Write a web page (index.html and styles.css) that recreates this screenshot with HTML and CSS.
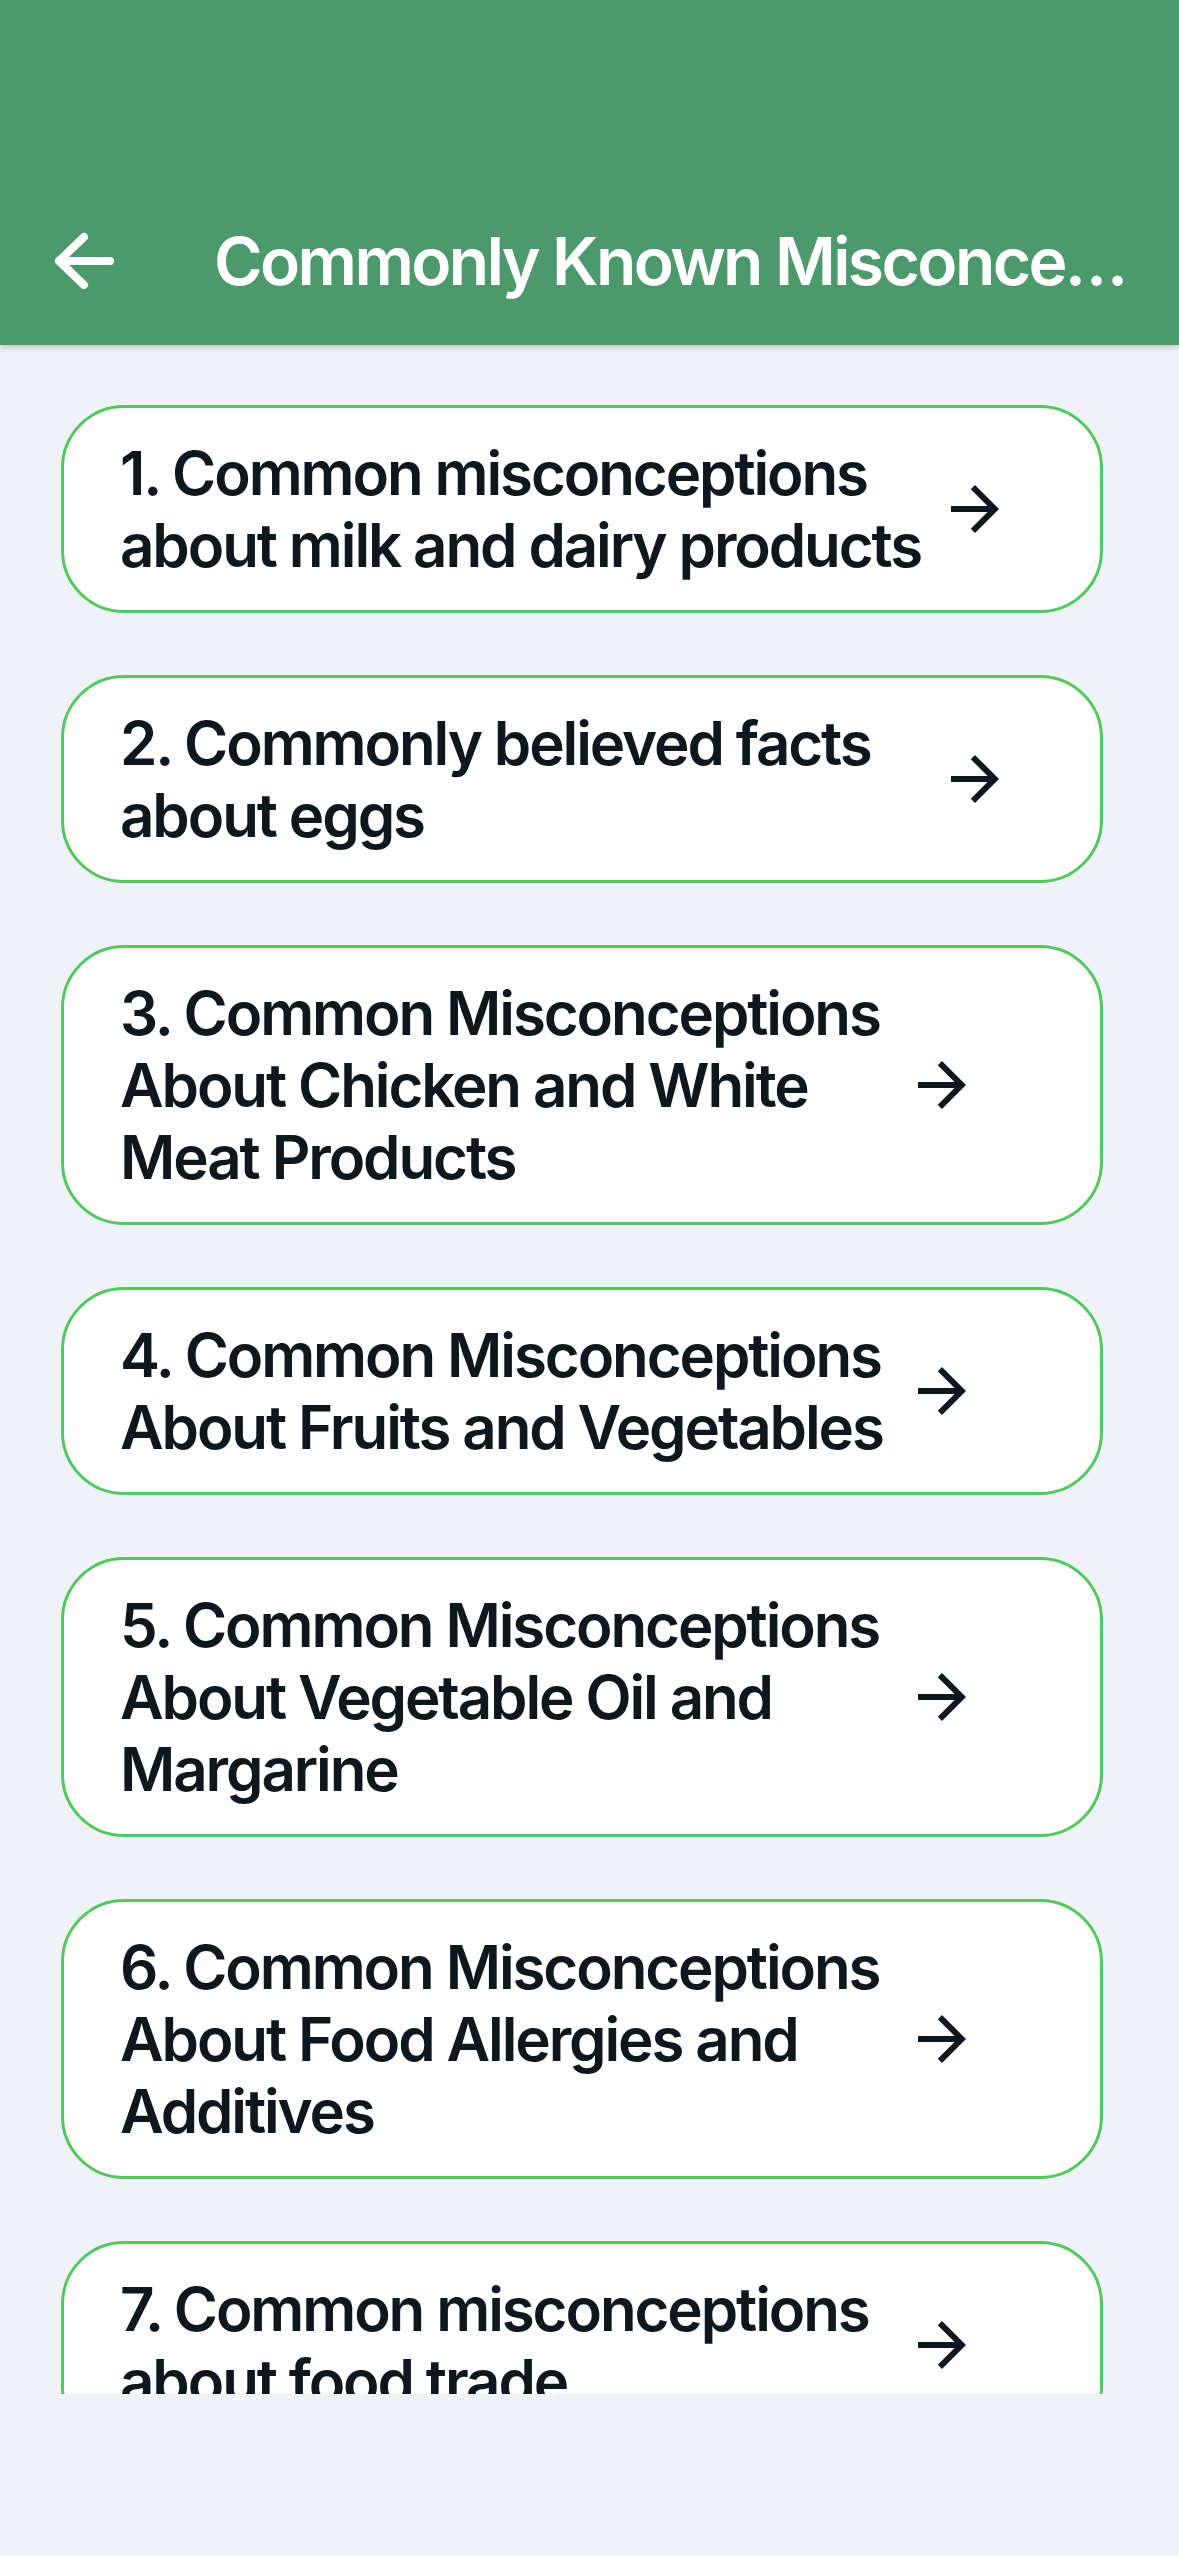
FILE: index.html
```html
<!DOCTYPE html>
<html lang="en">

<head>
    <meta charset="UTF-8">
    <meta name="viewport" content="width=device-width, initial-scale=1.0">
    <title>Commonly Known Misconceptions</title>
    <link rel="stylesheet" href="styles.css">
</head>

<body>
    <header class="appbar">
        <div class="appbar-row">
            <button class="back" aria-label="Back">
                <svg width="72" height="72" viewBox="0 0 72 72">
                    <path d="M12 36H63M37 12L12 36L37 60" fill="none" stroke="#fff" stroke-width="8"
                        stroke-linecap="round" stroke-linejoin="round" />
                </svg>
            </button>
            <h1 class="appbar-title">Commonly Known Misconceptions</h1>
        </div>
    </header>

    <main class="list">
        <a class="card card-wide" href="#">
            <span class="card-text">1. Common misconceptions about milk and dairy products</span>
            <svg class="card-arrow" width="72" height="72" viewBox="0 0 24 24">
                <path d="M12 4l-1.41 1.41L16.17 11H4v2h12.17l-5.58 5.59L12 20l8-8z" />
            </svg>
        </a>
        <a class="card card-wide" href="#">
            <span class="card-text">2. Commonly believed facts about eggs</span>
            <svg class="card-arrow" width="72" height="72" viewBox="0 0 24 24">
                <path d="M12 4l-1.41 1.41L16.17 11H4v2h12.17l-5.58 5.59L12 20l8-8z" />
            </svg>
        </a>
        <a class="card" href="#">
            <span class="card-text">3. Common Misconceptions About Chicken and White Meat Products</span>
            <svg class="card-arrow" width="72" height="72" viewBox="0 0 24 24">
                <path d="M12 4l-1.41 1.41L16.17 11H4v2h12.17l-5.58 5.59L12 20l8-8z" />
            </svg>
        </a>
        <a class="card" href="#">
            <span class="card-text">4. Common Misconceptions About Fruits and Vegetables</span>
            <svg class="card-arrow" width="72" height="72" viewBox="0 0 24 24">
                <path d="M12 4l-1.41 1.41L16.17 11H4v2h12.17l-5.58 5.59L12 20l8-8z" />
            </svg>
        </a>
        <a class="card" href="#">
            <span class="card-text">5. Common Misconceptions About Vegetable Oil and Margarine</span>
            <svg class="card-arrow" width="72" height="72" viewBox="0 0 24 24">
                <path d="M12 4l-1.41 1.41L16.17 11H4v2h12.17l-5.58 5.59L12 20l8-8z" />
            </svg>
        </a>
        <a class="card" href="#">
            <span class="card-text">6. Common Misconceptions About Food Allergies and Additives</span>
            <svg class="card-arrow" width="72" height="72" viewBox="0 0 24 24">
                <path d="M12 4l-1.41 1.41L16.17 11H4v2h12.17l-5.58 5.59L12 20l8-8z" />
            </svg>
        </a>
        <a class="card" href="#">
            <span class="card-text">7. Common misconceptions about food trade</span>
            <svg class="card-arrow" width="72" height="72" viewBox="0 0 24 24">
                <path d="M12 4l-1.41 1.41L16.17 11H4v2h12.17l-5.58 5.59L12 20l8-8z" />
            </svg>
        </a>
    </main>
</body>

</html>
```

FILE: styles.css
```css
body {
    margin: 0;
    background-color: #eff3f8;
    font-family: Inter, "Noto Sans", sans-serif;
    color: #0c181e;
}

.appbar {
    background-color: #4c996c;
    height: 345px;
    padding-top: 177px;
    box-sizing: border-box;
    box-shadow: 0 2px 6px rgba(0, 0, 0, 0.22);
    position: relative;
    z-index: 1;
}

.appbar-row {
    height: 168px;
    display: flex;
    align-items: center;
    padding-left: 47px;
    padding-right: 36px;
}

.back {
    width: 72px;
    height: 72px;
    padding: 0;
    border: none;
    background: none;
    flex: none;
}

.back svg {
    display: block;
}

.appbar-title {
    margin: 0 0 0 95px;
    font-size: 66px;
    font-weight: 600;
    color: #fff;
    white-space: nowrap;
    overflow: hidden;
    text-overflow: ellipsis;
    letter-spacing: -2.6px;
}

.list {
    height: 2049px;
    overflow: hidden;
    box-sizing: border-box;
    padding: 60px 76px 0 61px;
    display: flex;
    flex-direction: column;
    gap: 62px;
}

.card {
    display: flex;
    align-items: center;
    flex: none;
    background-color: #fff;
    border: 3px solid #52c85f;
    border-radius: 63px;
    padding: 29px 0 29px 56px;
    text-decoration: none;
    color: inherit;
}

.card-text {
    flex: 0 0 786px;
    font-size: 60px;
    font-weight: 600;
    line-height: 72px;
    letter-spacing: -2.1px;
}

.card-wide .card-text {
    flex-basis: 819px;
}

.card-arrow {
    flex: none;
    fill: #0c181e;
}
```
